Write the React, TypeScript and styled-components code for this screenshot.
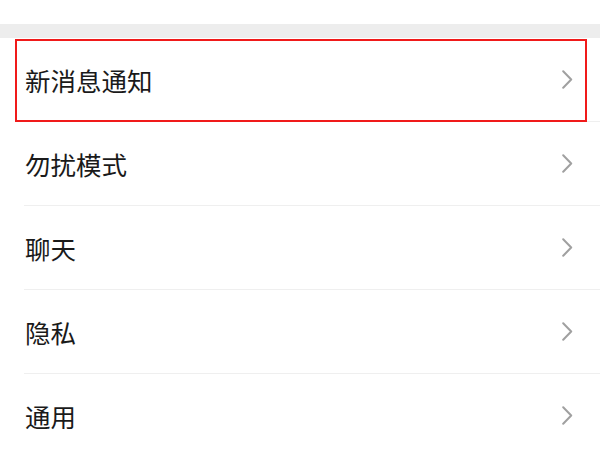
import React from "react";
import styled, { createGlobalStyle } from "styled-components";

const Global = createGlobalStyle`
  html, body { margin: 0; padding: 0; background: #ffffff; }
  body { font-family: "Noto Sans CJK SC", "Noto Sans", sans-serif; }
`;

const Page = styled.div`
  width: 600px;
  height: 450px;
  overflow: hidden;
  background: #ffffff;
  display: flex;
  flex-direction: column;
`;

const TopSpace = styled.div`
  flex-shrink: 0;
  height: 24px;
  background: #ffffff;
`;

const GrayBand = styled.div`
  flex-shrink: 0;
  height: 14px;
  background: #ededed;
`;

const List = styled.div`
  flex-shrink: 0;
  display: flex;
  flex-direction: column;
`;

const Row = styled.div`
  position: relative;
  flex-shrink: 0;
  height: 84px;
  margin-left: 24px;
  padding-right: 27px;
  display: flex;
  align-items: center;
  justify-content: space-between;
  border-bottom: 1px solid #efefef;
  box-sizing: border-box;
`;

const Label = styled.span`
  font-size: 25.5px;
  color: #1a1a1a;
  line-height: 1;
  padding-left: 1px;
`;

const Highlight = styled.div`
  position: absolute;
  left: -9px;
  top: 1px;
  right: 13px;
  bottom: -1px;
  border: 2px solid #f01a1a;
  pointer-events: none;
`;

const Chevron = () => (
  <svg width="11" height="19" viewBox="0 0 11 19" fill="none">
    <path d="M1.2 1.2 L9.2 9.5 L1.2 17.8" stroke="#a0a0a0" strokeWidth="2" strokeLinecap="round" strokeLinejoin="round" />
  </svg>
);

const items = ["新消息通知", "勿扰模式", "聊天", "隐私", "通用"];

export default function App() {
  return (
    <Page>
      <Global />
      <TopSpace />
      <GrayBand />
      <List>
        {items.map((t, i) => (
          <Row key={t}>
            <Label>{t}</Label>
            <Chevron />
            {i === 0 && <Highlight />}
          </Row>
        ))}
      </List>
    </Page>
  );
}
